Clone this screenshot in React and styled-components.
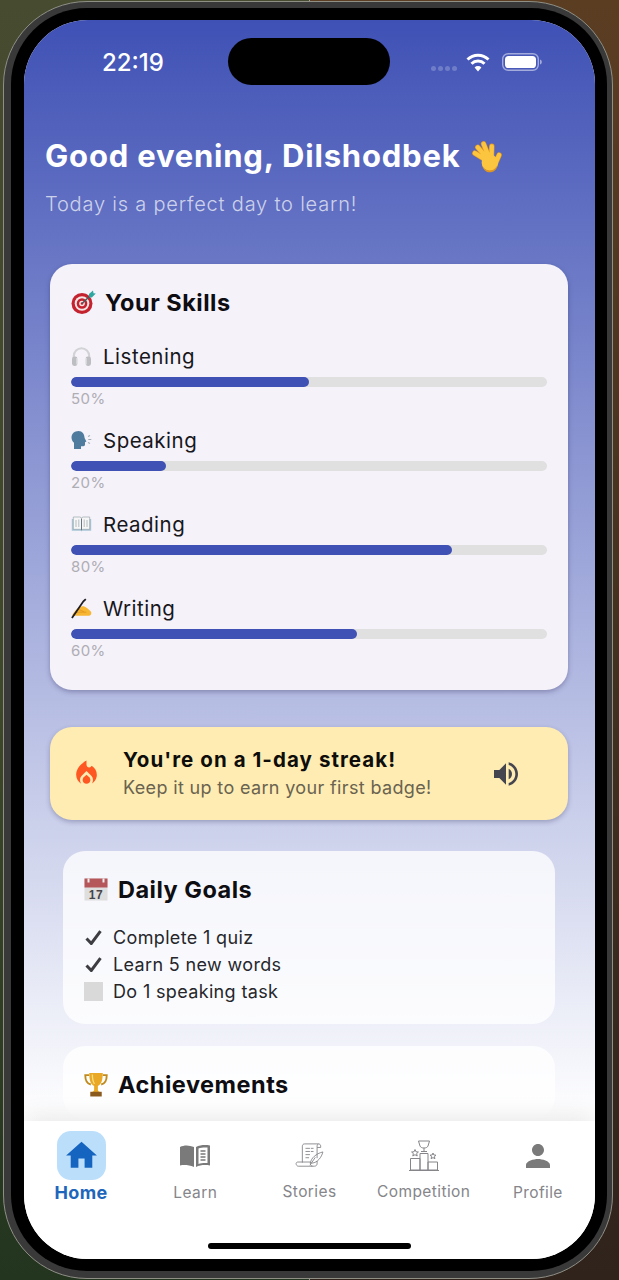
import React from "react";
import styled, { createGlobalStyle } from "styled-components";
import { MdHome, MdPerson, MdLocalFireDepartment, MdVolumeUp } from "react-icons/md";

const GlobalStyle = createGlobalStyle`
  html, body { margin: 0; padding: 0; }
  body { font-family: Inter, "Noto Sans", sans-serif; }
  * { box-sizing: border-box; }
`;

const Desktop = styled.div`
  width: 619px;
  height: 1280px;
  padding: 1px 6px 1px 3px;
  overflow: hidden;
  background:
    linear-gradient(180deg, #474b30 0%, #3d4729 55%, #23351f 100%) left / 50% 100% no-repeat,
    linear-gradient(180deg, #5b3d22 0%, #40301f 55%, #30231c 100%) right / 50% 100% no-repeat;
`;

const Frame = styled.div`
  height: 100%;
  padding: 6px 5px 7px 7px;
  border: 1px solid #8f8f86;
  border-radius: 84px;
  background: #393939;
`;

const Bezel = styled.div`
  height: 100%;
  padding: 12px 12px 12px 13px;
  border-radius: 76px;
  background: #000;
`;

const Screen = styled.div`
  position: relative;
  display: flex;
  flex-direction: column;
  height: 100%;
  overflow: hidden;
  border-radius: 64px;
  background: #fff;
`;

const Island = styled.div`
  position: absolute;
  top: 18px;
  left: 204px;
  width: 162px;
  height: 47px;
  border-radius: 24px;
  background: #000;
`;

const Scroll = styled.div`
  flex: 1;
  min-height: 0;
  overflow: hidden;
  background: linear-gradient(180deg, #3f51b5 0, #ffffff 1101px);
`;

const StatusBar = styled.div`
  display: flex;
  align-items: flex-start;
  justify-content: space-between;
  height: 80px;
  padding: 27px 53px 0 78px;
`;

const Clock = styled.div`
  margin-top: 1px;
  font-size: 24px;
  line-height: 30px;
  font-weight: 500;
  color: #fff;
`;

const StatusIcons = styled.div`
  display: flex;
  align-items: center;
  gap: 12px;
  height: 30px;
`;

const SignalDots = styled.div`
  display: flex;
  gap: 2px;
  margin: 12px -3px 0 0;
`;

const SignalDot = styled.span`
  width: 5px;
  height: 5px;
  border-radius: 50%;
  background: rgba(255, 255, 255, 0.22);
`;

const Greeting = styled.div`
  padding: 36px 21px 0;
`;

const Hello = styled.h1`
  display: flex;
  align-items: center;
  gap: 9px;
  margin: 0;
  font-size: 31px;
  line-height: 40px;
  font-weight: 700;
  letter-spacing: 0.8px;
  color: #fff;
`;

const Subtitle = styled.p`
  margin: 15px 0 0;
  font-size: 20px;
  line-height: 26px;
  letter-spacing: 0.8px;
  font-weight: 300;
  color: rgba(255, 255, 255, 0.7);
`;

const SkillsCard = styled.section`
  margin: 47px 27px 0 26px;
  padding: 24px 21px 30px;
  border-radius: 22px;
  background: #f5f2fa;
  box-shadow: 0 2px 5px rgba(40, 40, 90, 0.35);
`;

const CardTitle = styled.h2`
  display: flex;
  align-items: center;
  gap: ${(p) => p.$gap || 10}px;
  height: 28px;
  margin: 0;
  font-size: 23.5px;
  font-weight: 700;
  letter-spacing: 0.5px;
  color: #0d0d12;
`;

const Skill = styled.div`
  margin-top: ${(p) => (p.$first ? 27 : 19)}px;
`;

const SkillLabel = styled.div`
  display: flex;
  align-items: center;
  gap: 11px;
  height: 26px;
  font-size: 20.5px;
  letter-spacing: 0.5px;
  color: #17171c;
`;

const EmojiSlot = styled.span`
  display: flex;
  align-items: center;
  justify-content: center;
  width: 21px;
  height: 22px;
`;

const Track = styled.div`
  height: 10px;
  margin-top: 8px;
  border-radius: 5px;
  background: #e0e0e0;
  overflow: hidden;
`;

const Fill = styled.div`
  height: 100%;
  border-radius: 5px;
  background: #3f51b5;
`;

const Percent = styled.div`
  margin-top: 3px;
  font-size: 15px;
  line-height: 18px;
  letter-spacing: 0.4px;
  color: #afadb4;
`;

const StreakCard = styled.section`
  display: flex;
  align-items: center;
  height: 93px;
  margin: 37px 27px 0 26px;
  padding: 0 46px 0 21px;
  border-radius: 22px;
  background: #ffecb3;
  box-shadow: 0 2px 5px rgba(40, 40, 90, 0.3);
`;

const StreakText = styled.div`
  flex: 1;
  margin-left: 21px;
`;

const StreakTitle = styled.div`
  font-size: 20.5px;
  line-height: 26px;
  font-weight: 700;
  letter-spacing: 1.05px;
  color: #0e0d0a;
`;

const StreakSub = styled.div`
  margin-top: 3px;
  font-size: 18px;
  line-height: 24px;
  letter-spacing: 0.35px;
  color: #69634f;
`;

const PlainCard = styled.section`
  margin: ${(p) => p.$top}px 40px 0 39px;
  padding: 24px 21px 21px;
  border-radius: 22px;
  background: rgba(255, 255, 255, 0.78);
`;

const GoalList = styled.ul`
  display: flex;
  flex-direction: column;
  gap: 3px;
  margin: 22px 0 0;
  padding: 0;
  list-style: none;
`;

const Goal = styled.li`
  display: flex;
  align-items: center;
  gap: 10px;
  height: 24px;
  font-size: 18px;
  letter-spacing: 0.35px;
  color: #26262b;
`;

const GoalMark = styled.span`
  display: flex;
  align-items: center;
  justify-content: center;
  width: 19px;
  height: 19px;
  background: ${(p) => (p.$empty ? "#d9d9d9" : "transparent")};
`;

const TabBar = styled.nav`
  position: relative;
  z-index: 1;
  display: flex;
  flex-direction: column;
  height: 138px;
  background: #fff;
  box-shadow: 0 -2px 24px rgba(0, 0, 0, 0.11);
`;

const TabRow = styled.div`
  display: grid;
  grid-template-columns: repeat(5, 1fr);
  height: 122px;
  padding-top: 10px;
`;

const Tab = styled.div`
  display: flex;
  flex-direction: column;
  align-items: center;
  font-size: ${(p) => (p.$active ? 18 : 15.5)}px;
  font-weight: ${(p) => (p.$active ? 700 : 400)};
  letter-spacing: 0.4px;
  color: ${(p) => (p.$active ? "#1e66bb" : "#85858a")};
`;

const TabIcon = styled.div`
  display: flex;
  align-items: center;
  justify-content: center;
  width: 49px;
  height: 49px;
  border-radius: 14px;
  background: ${(p) => (p.$active ? "#bbdefb" : "transparent")};
  color: ${(p) => (p.$active ? "#1565c0" : "#7a7a7a")};
`;

const TabLabel = styled.span`
  margin-top: ${(p) => p.$top}px;
  line-height: 22px;
`;

const HomeIndicator = styled.div`
  align-self: center;
  width: 203px;
  height: 6px;
  border-radius: 3px;
  background: #000;
`;

const Wifi = () => (
  <svg width="24" height="19" viewBox="0 0 24 19" fill="none" stroke="#fff" strokeWidth="3">
    <path d="M1.5 6.5a15 15 0 0 1 21 0" />
    <path d="M5.5 10.7a9.3 9.3 0 0 1 13 0" />
    <path d="M12 18.5l-3.4-4a4.8 4.8 0 0 1 6.800 0z" fill="#fff" stroke="none" />
  </svg>
);

const Battery = () => (
  <svg width="40" height="18" viewBox="0 0 40 18" fill="none">
    <rect x="0.7" y="0.7" width="35.6" height="16.6" rx="5.5" stroke="rgba(255,255,255,.5)" strokeWidth="1.4" />
    <rect x="3" y="3" width="31" height="12" rx="3.6" fill="#fff" />
    <path d="M38 6.5c1.4.4 1.8 1.4 1.8 2.5s-.4 2.1-1.8 2.5z" fill="rgba(255,255,255,.5)" />
  </svg>
);

const WaveHand = () => (
  <svg width="32" height="33" viewBox="0 0 33 33" fill="none" strokeLinecap="round">
    <g stroke="#dd9422" strokeWidth="5.600">
      <path d="M21 23 5 13M21 22 8 7M21 21 14 3.500M22 21 22.500 6M26 24 30 15" />
    </g>
    <g stroke="#fbc53f" strokeWidth="4.400">
      <path d="M21 23 5 13M21 22 8 7M21 21 14 3.500M22 21 22.500 6M26 24 30 15" />
    </g>
    <circle cx="20.500" cy="23" r="8.500" fill="#fbc53f" />
    <path d="M12.500 26c2 3.500 5 5 9 4.800 3-.2 6-2.800 7-6.300-.3 5.500-4 8.300-8 8.300-3.500 0-6.500-2.300-8-6.800z" fill="#dd9422" />
  </svg>
);

const Target = () => (
  <svg width="25" height="24" viewBox="0 0 25 24">
    <circle cx="11" cy="13.500" r="10.500" fill="#c4222f" />
    <circle cx="11" cy="13.500" r="7.300" fill="#f4e6e4" />
    <circle cx="11" cy="13.500" r="5.300" fill="#c4222f" />
    <circle cx="11" cy="13.500" r="2.800" fill="#f4e6e4" />
    <circle cx="11" cy="13.500" r="1.300" fill="#c4222f" />
    <path d="M11 13.500 20 5" stroke="#4b5a60" strokeWidth="1.400" />
    <path d="M18 4l4-3.500.5 2.700 2.300.4-4 3.800-2.700-.2z" fill="#2fa6a0" />
  </svg>
);

const Headphones = () => (
  <svg width="21" height="21" viewBox="0 0 21 21" fill="none">
    <path d="M2.800 13V10a7.700 7.700 0 0 1 15.400 0v3" stroke="#d2d3d5" strokeWidth="2" />
    <rect x="1" y="10.500" width="5.500" height="9.500" rx="2.400" fill="#bcbec1" />
    <rect x="14.500" y="10.500" width="5.500" height="9.500" rx="2.400" fill="#bcbec1" />
    <path d="M5.500 12h1v6.500h-1zM14.500 12h1v6.500h-1z" fill="#eeeef0" />
  </svg>
);

const SpeakingHead = () => (
  <svg width="21" height="20" viewBox="0 0 21 20">
    <path d="M7.500 1C3.500 1 .5 3.800.5 7.500c0 2.300 1 3.900 2.500 5.200V19h7v-2.800h2.300c1 0 1.700-.7 1.700-1.700v-2.300l1.400-.6-1.700-3.400C13.300 4 11.500 1 7.500 1z" fill="#4f7c9e" />
    <path d="M17 6.500l2-1M17.300 9.500h3M17 12.500l2 1" stroke="#a3adb5" strokeWidth="1.100" fill="none" />
  </svg>
);

const OpenBook = () => (
  <svg width="21" height="16" viewBox="0 0 21 16" fill="none">
    <path d="M.8 3v11.700h8.500c.6 0 .9.500 1.200.9.300-.4.600-.9 1.200-.9h8.500V3z" fill="#a9c6d6" />
    <path d="M2.300 1h6.500c.8 0 1.500.5 1.700 1.200C10.700 1.500 11.400 1 12.200 1h6.500v12.300h-6.500c-.8 0-1.400.3-1.700.8-.3-.5-.9-.8-1.700-.8H2.300z" fill="#f6f6f6" stroke="#8c9aa3" strokeWidth=".6" />
    <path d="M5 4v7M7.800 3.500v7.500M13.200 3.500v7.500M16 4v7" stroke="#b4bcc2" strokeWidth="1" />
    <path d="M10.500 2.500v11.500" stroke="#66757f" strokeWidth="1" />
  </svg>
);

const WritingHand = () => (
  <svg width="22" height="21" viewBox="0 0 22 21" fill="none">
    <path d="M1.500 17C3 14.500 6 10.500 9 9c2-1 3.500-1.200 5-.5 2.500 1.200 5 3.500 7 5.500.8 1.800 0 4-2 4.200H5c-2 0-4.300.2-3.500-1.200z" fill="#f7b733" />
    <path d="M5 15c3.500-.8 7.500-1 11-.5M8 11.500c2 .5 4 1.500 5.500 2.500" stroke="#e08f1c" strokeWidth=".8" />
    <path d="M1 20.500 13 3l2.500-2.300" stroke="#1d1d24" strokeWidth="1.900" />
  </svg>
);

const Calendar = () => (
  <svg width="24" height="23" viewBox="0 0 24 23">
    <rect x="0.500" y="0.500" width="23" height="22" fill="#dedede" />
    <rect x="0.500" y="0.500" width="23" height="9" fill="#b5565a" />
    <path d="M4.500 .5v4M19.500 .5v4" stroke="#eee" strokeWidth="2" />
    <text x="12" y="20.500" textAnchor="middle" fontFamily="Liberation Sans, sans-serif" fontSize="12" fill="#45454a">17</text>
  </svg>
);

const Trophy = () => (
  <svg width="24" height="25" viewBox="0 0 23 24" fill="none">
    <path d="M5 3H1.200c0 5 1.300 8 5.300 9M18 3h3.800c0 5-1.300 8-5.300 9" stroke="#c18a1c" strokeWidth="1.800" />
    <path d="M5 1h13c0 7-1.500 11-4.700 12.500v3.500c0 1 1 2 2.200 2.300h-8c1.200-.3 2.200-1.300 2.200-2.300v-3.500C6.500 12 5 8 5 1z" fill="#e9a825" />
    <rect x="6" y="19" width="11" height="4.500" fill="#8b5a1e" />
    <path d="M8 2.500c0 4 .7 7 2 9" stroke="#f9dc7c" strokeWidth="1.300" />
  </svg>
);

const Check = () => (
  <svg width="17" height="15" viewBox="0 0 17 15" fill="none">
    <path d="M1.500 8.500 6.300 13.500 15.500 1.200" stroke="#3d3d42" strokeWidth="3" />
  </svg>
);

const LearnIcon = () => (
  <svg width="30" height="23" viewBox="0 0 30 23" fill="#7a7a7a">
    <path d="M0 3c4-2 9-2 14 0v20c-5-2-10-2.500-14-1.500z" />
    <path d="M16 3c4-2 9-2.500 14-1.500v20c-5-1-10-.5-14 1.500z" />
    <path d="M18.500 4.500c2.500-1 6-1.300 9-1v15.500c-3-.3-6.500 0-9 1z" fill="#fff" />
    <path d="M20.500 7h5M20.500 10h5M20.500 13h5M20.500 16h5" stroke="#7a7a7a" strokeWidth="1.300" />
  </svg>
);

const StoriesIcon = () => (
  <svg width="29" height="25" viewBox="0 0 32 28" fill="none" stroke="#85858a" strokeWidth="1">
    <path d="M8 22V3.500C8 2 9 1 10.500 1H26c1.500 0 2.500 1 2.500 2.500V5h-4V3.500C24.500 2 25.500 1 26 1" />
    <path d="M24.500 5v12" />
    <path d="M11.500 6h9M11.500 9.500h9M11.500 13h6M11.500 16.500h4" strokeDasharray="5 1" />
    <path d="M1 23c0-1 1-1.700 2-1.700h14v2c0 1.500 1 2.700 2.500 2.700H3.500C2 26 1 24.500 1 23zM19.500 26h2c1.500 0 3-1 3-2.700V20" />
    <path d="M17 22c1-5 6-10 14-12-1.500 6-6 12-12 12.500zM16.500 25l6-9" />
  </svg>
);

const CompetitionIcon = () => (
  <svg width="30" height="31" viewBox="0 0 30 31" fill="none" stroke="#85858a" strokeWidth="1">
    <path d="M9.500 1h11l-1.500 5c-.5 1.300-2 2-4 2s-3.500-.7-4-2z" />
    <path d="M15 8v3M12 11.500h6" />
    <path d="M11 13.500h8V30h-8zM1.500 18.500H11V30H1.500zM19 22h9.500v8H19zM0 30.500h30" />
    <path d="M6 9.500l1 2.300 2.400.2-1.800 1.600.6 2.400L6 14.700 3.800 16l.6-2.400L2.600 12l2.400-.2zM24 13l.9 2 2.100.2-1.600 1.400.5 2.100-1.900-1.100-1.900 1.100.5-2.100-1.600-1.400 2.100-.2z" />
  </svg>
);

const skills = [
  { name: "Listening", value: 50, icon: <Headphones /> },
  { name: "Speaking", value: 20, icon: <SpeakingHead /> },
  { name: "Reading", value: 80, icon: <OpenBook /> },
  { name: "Writing", value: 60, icon: <WritingHand /> },
];

const goals = [
  { text: "Complete 1 quiz", done: true },
  { text: "Learn 5 new words", done: true },
  { text: "Do 1 speaking task", done: false },
];

const tabs = [
  { name: "Home", icon: <MdHome size={37} />, top: 2, active: true },
  { name: "Learn", icon: <LearnIcon />, top: 2 },
  { name: "Stories", icon: <StoriesIcon />, top: 1 },
  { name: "Competition", icon: <CompetitionIcon />, top: 1 },
  { name: "Profile", icon: <MdPerson size={36} />, top: 2 },
];

export default function App() {
  return (
    <Desktop>
      <GlobalStyle />
      <Frame>
        <Bezel>
          <Screen>
            <Island />
            <Scroll>
              <StatusBar>
                <Clock>22:19</Clock>
                <StatusIcons>
                  <SignalDots>
                    <SignalDot />
                    <SignalDot />
                    <SignalDot />
                    <SignalDot />
                  </SignalDots>
                  <Wifi />
                  <Battery />
                </StatusIcons>
              </StatusBar>
              <Greeting>
                <Hello>
                  Good evening, Dilshodbek <WaveHand />
                </Hello>
                <Subtitle>Today is a perfect day to learn!</Subtitle>
              </Greeting>
              <SkillsCard>
                <CardTitle $gap={9}>
                  <Target />
                  Your Skills
                </CardTitle>
                {skills.map((s, i) => (
                  <Skill key={s.name} $first={i === 0}>
                    <SkillLabel>
                      <EmojiSlot>{s.icon}</EmojiSlot>
                      {s.name}
                    </SkillLabel>
                    <Track>
                      <Fill style={{ width: `${s.value}%` }} />
                    </Track>
                    <Percent>{s.value}%</Percent>
                  </Skill>
                ))}
              </SkillsCard>
              <StreakCard>
                <MdLocalFireDepartment size={31} color="#ff5722" />
                <StreakText>
                  <StreakTitle>You're on a 1-day streak!</StreakTitle>
                  <StreakSub>Keep it up to earn your first badge!</StreakSub>
                </StreakText>
                <MdVolumeUp size={32} color="#45454f" />
              </StreakCard>
              <PlainCard $top={31}>
                <CardTitle>
                  <Calendar />
                  Daily Goals
                </CardTitle>
                <GoalList>
                  {goals.map((g) => (
                    <Goal key={g.text}>
                      <GoalMark $empty={!g.done}>{g.done && <Check />}</GoalMark>
                      {g.text}
                    </Goal>
                  ))}
                </GoalList>
              </PlainCard>
              <PlainCard $top={22}>
                <CardTitle>
                  <Trophy />
                  Achievements
                </CardTitle>
              </PlainCard>
            </Scroll>
            <TabBar>
              <TabRow>
                {tabs.map((t) => (
                  <Tab key={t.name} $active={t.active}>
                    <TabIcon $active={t.active}>{t.icon}</TabIcon>
                    <TabLabel $top={t.top}>{t.name}</TabLabel>
                  </Tab>
                ))}
              </TabRow>
              <HomeIndicator />
            </TabBar>
          </Screen>
        </Bezel>
      </Frame>
    </Desktop>
  );
}
